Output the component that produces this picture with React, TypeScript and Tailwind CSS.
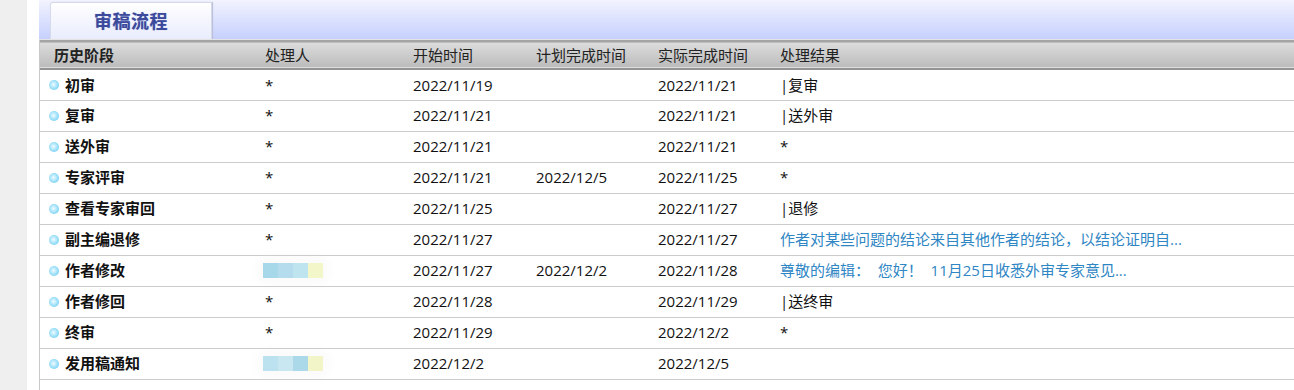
const rows: {
  stage: string;
  handler: string | string[];
  start: string;
  plan: string;
  actual: string;
  result: string;
  link?: boolean;
}[] = [
  { stage: "初审", handler: "*", start: "2022/11/19", plan: "", actual: "2022/11/21", result: "|复审" },
  { stage: "复审", handler: "*", start: "2022/11/21", plan: "", actual: "2022/11/21", result: "|送外审" },
  { stage: "送外审", handler: "*", start: "2022/11/21", plan: "", actual: "2022/11/21", result: "*" },
  { stage: "专家评审", handler: "*", start: "2022/11/21", plan: "2022/12/5", actual: "2022/11/25", result: "*" },
  { stage: "查看专家审回", handler: "*", start: "2022/11/25", plan: "", actual: "2022/11/27", result: "|退修" },
  {
    stage: "副主编退修",
    handler: "*",
    start: "2022/11/27",
    plan: "",
    actual: "2022/11/27",
    result: "作者对某些问题的结论来自其他作者的结论，以结论证明自...",
    link: true,
  },
  {
    stage: "作者修改",
    handler: ["#a6d8ea", "#b5dcec", "#bde4ef", "#f3f6c8"],
    start: "2022/11/27",
    plan: "2022/12/2",
    actual: "2022/11/28",
    result: "尊敬的编辑：  您好！  11月25日收悉外审专家意见...",
    link: true,
  },
  { stage: "作者修回", handler: "*", start: "2022/11/28", plan: "", actual: "2022/11/29", result: "|送终审" },
  { stage: "终审", handler: "*", start: "2022/11/29", plan: "", actual: "2022/12/2", result: "*" },
  {
    stage: "发用稿通知",
    handler: ["#bde2ef", "#c9e7f0", "#acd9ea", "#f2f5c8"],
    start: "2022/12/2",
    plan: "",
    actual: "2022/12/5",
    result: "",
  },
];

function Mosaic({ colors }: { colors: string[] }) {
  return (
    <div className="-ml-[2px] flex h-[15px] w-fit rounded-full bg-[#fbfbfb] shadow-[0_0_10px_8px_#fbfbfb]">
      {colors.map((c, i) => (
        <div key={i} className="h-[15px] w-[15px]" style={{ background: c }} />
      ))}
    </div>
  );
}

function Bullet() {
  return (
    <span className="inline-block h-[10px] w-[10px] rounded-full bg-[radial-gradient(circle_at_45%_45%,#f0fbff_0%,#a8e4fa_45%,#4fc1ec_100%)]" />
  );
}

export default function App() {
  return (
    <div className="flex h-[390px] w-[1294px] overflow-hidden bg-white font-['Open_Sans','Noto_Sans_CJK_SC',sans-serif] text-[15px] text-[#111]">
      <div className="w-[27px] shrink-0 bg-[#efefef]" />
      <div className="w-[12px] shrink-0" />
      <div className="flex min-w-0 flex-1 flex-col">
        <div className="flex h-[39px] items-end bg-gradient-to-b from-[#f2f3fd] to-[#c6d0fd] pl-[11px]">
          <div className="flex h-[37px] w-[162px] items-center justify-center rounded-tl-[3px] border border-b-0 border-[#d6d9ea] bg-gradient-to-b from-white to-[#e9ecfc] shadow-[1px_0_1px_#b7bdd6]">
            <span className="text-[18px] font-bold tracking-[0.5px] text-[#3c4a9c] [text-shadow:0_0_1px_#9aa3d6]">
              审稿流程
            </span>
          </div>
        </div>
        <div className="h-px bg-[#e4e4e4]" />
        <div className="flex-1 border-l border-[#c8c8c8]">
          <table className="w-full table-fixed border-collapse">
            <colgroup>
              <col className="w-[225px]" />
              <col className="w-[148px]" />
              <col className="w-[123px]" />
              <col className="w-[122px]" />
              <col className="w-[122px]" />
              <col />
            </colgroup>
            <thead>
              <tr className="h-[28px] border-t-2 border-b-2 border-t-[#a4a4a4] border-b-[#949494] bg-gradient-to-b from-[#dcdcdc] to-[#bcbcbc] text-left text-[#222]">
                <th className="pl-[14px] font-bold">历史阶段</th>
                <th className="font-normal">处理人</th>
                <th className="font-normal">开始时间</th>
                <th className="font-normal">计划完成时间</th>
                <th className="font-normal">实际完成时间</th>
                <th className="font-normal">处理结果</th>
              </tr>
            </thead>
            <tbody>
              {rows.map((r) => (
                <tr key={r.stage} className="h-[31px] border-b border-[#cccccc]">
                  <td className="pl-[9px]">
                    <div className="flex items-center gap-[6px]">
                      <Bullet />
                      <span className="font-bold">{r.stage}</span>
                    </div>
                  </td>
                  <td>{typeof r.handler === "string" ? r.handler : <Mosaic colors={r.handler} />}</td>
                  <td>{r.start}</td>
                  <td>{r.plan}</td>
                  <td>{r.actual}</td>
                  <td className={r.link ? "truncate whitespace-pre text-[#2f86c4]" : ""}>{r.result}</td>
                </tr>
              ))}
            </tbody>
          </table>
        </div>
      </div>
    </div>
  );
}
